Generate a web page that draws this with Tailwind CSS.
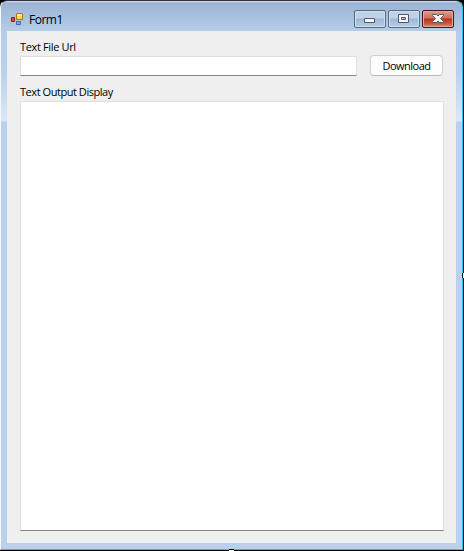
<!DOCTYPE html>
<html lang="en">
<head>
<meta charset="utf-8">
<title>Form1</title>
<script src="https://cdn.jsdelivr.net/npm/@tailwindcss/browser@4"></script>
</head>
<body class="w-[464px] h-[551px] overflow-hidden bg-[#202027] font-['Open_Sans',sans-serif] text-black">
<div class="relative w-[464px] h-[551px] bg-black pr-px pb-px">
  <div class="w-full h-full rounded-t-[7px] border-t border-t-[#30303a] border-l border-l-[#f4f8fc] border-r border-r-[#16c8ee] border-b border-b-[#16c8ee] bg-[linear-gradient(#d8e5f2_0px,#9ab5d3_2px,#a3bddb_12px,#b5cde7_30px,#b9d1ea_70px,#dae7f5_118px,#dae7f5_120px,#b9d1ea_121px)] flex flex-col pl-[6px] pr-[6px] pb-[6px]">
    <header class="h-[30px] shrink-0 flex items-start">
      <svg class="mt-[11px] ml-[3px]" width="14" height="14" viewBox="0 0 14 14">
        <path d="M.5 .5h13v13H.5z" fill="none" stroke="#b7bfc8"/>
        <path d="M6.500 1.500h6v6h-6z" fill="#ffd750" stroke="#a77811"/>
        <path d="M7 2h5v2H7z" fill="#ffeda3"/>
        <path d="M1.500 5.500h3v4h-3z" fill="#d94c3d" stroke="#8d1f1b"/>
        <path d="M6.500 9.500h4v3h-4z" fill="#78a9f3" stroke="#3666bf"/>
      </svg>
      <h1 class="ml-[5px] mt-[11px] text-[12px] leading-[16px] tracking-[-0.5px] grow">Form1</h1>
      <div class="flex gap-[2px] mt-[9px] mr-[2px]">
        <button class="w-[32px] h-[18px] rounded-[2px] border border-[#586b82] bg-[linear-gradient(#bfd2e7_0_7px,#9db8d5_8px,#b5cde6)] shadow-[inset_0_0_0_1px_#cfdeed]">
          <svg class="block" width="30" height="16" viewBox="0 0 30 16"><path d="M9.500 7.500h10v4h-10z" fill="#f6f6f6" stroke="#545866"/></svg>
        </button>
        <button class="w-[32px] h-[18px] rounded-[2px] border border-[#586b82] bg-[linear-gradient(#bfd2e7_0_7px,#9db8d5_8px,#b5cde6)] shadow-[inset_0_0_0_1px_#cfdeed]">
          <svg class="block" width="30" height="16" viewBox="0 0 30 16"><path fill-rule="evenodd" d="M9.500 3.500h10v8h-10zM12.500 6.500h4v2h-4z" fill="#f6f6f6" stroke="#545866"/></svg>
        </button>
        <button class="w-[32px] h-[18px] rounded-[2px] border border-[#4c111c] bg-[linear-gradient(#df9d8d_0px,#cf6f5b_7px,#b9321c_8px,#c4523a_12px,#d88b70)] shadow-[inset_0_0_0_1px_#e2a99d]">
          <svg class="block" width="30" height="16" viewBox="0 0 30 16"><path d="M9.500 3.500h4l1.500 1.500 1.500-1.500h4v1L17.500 7.500l3 3v1h-4L15 10l-1.500 1.500h-4v-1l3-3-3-3z" fill="#f6f6f6" stroke="#545866"/></svg>
        </button>
      </div>
    </header>
    <main class="w-[449px] h-[512px] bg-[#efefef] pl-[13px] pt-[8px] text-[11px] leading-[16px]">
      <label class="block h-[17px] tracking-[-0.35px]">Text File Url</label>
      <div class="flex items-start gap-[13px] h-[21px]">
        <input class="mt-0 w-[337px] h-[20px] bg-white border border-[#dfdfdf] border-b-[#858585] outline-none">
        <button class="-mt-px w-[73px] h-[21px] bg-[#fdfdfd] border border-[#d0d0d0] border-b-[#b9b9b9] rounded-[4px] leading-[19px] tracking-[-0.5px]">Download</button>
      </div>
      <label class="block mt-[7px] h-[17px] tracking-[-0.45px]">Text Output Display</label>
      <textarea class="block w-[424px] h-[430px] bg-white border border-[#dedede] border-b-[#858585] resize-none outline-none"></textarea>
    </main>
  </div>
  <i class="absolute left-[229px] top-[549px] w-[5px] h-[2px] bg-white border-t border-black"></i>
  <i class="absolute left-[462px] top-[273px] w-[2px] h-[5px] bg-white border-l border-black"></i>
</div>
</body>
</html>
